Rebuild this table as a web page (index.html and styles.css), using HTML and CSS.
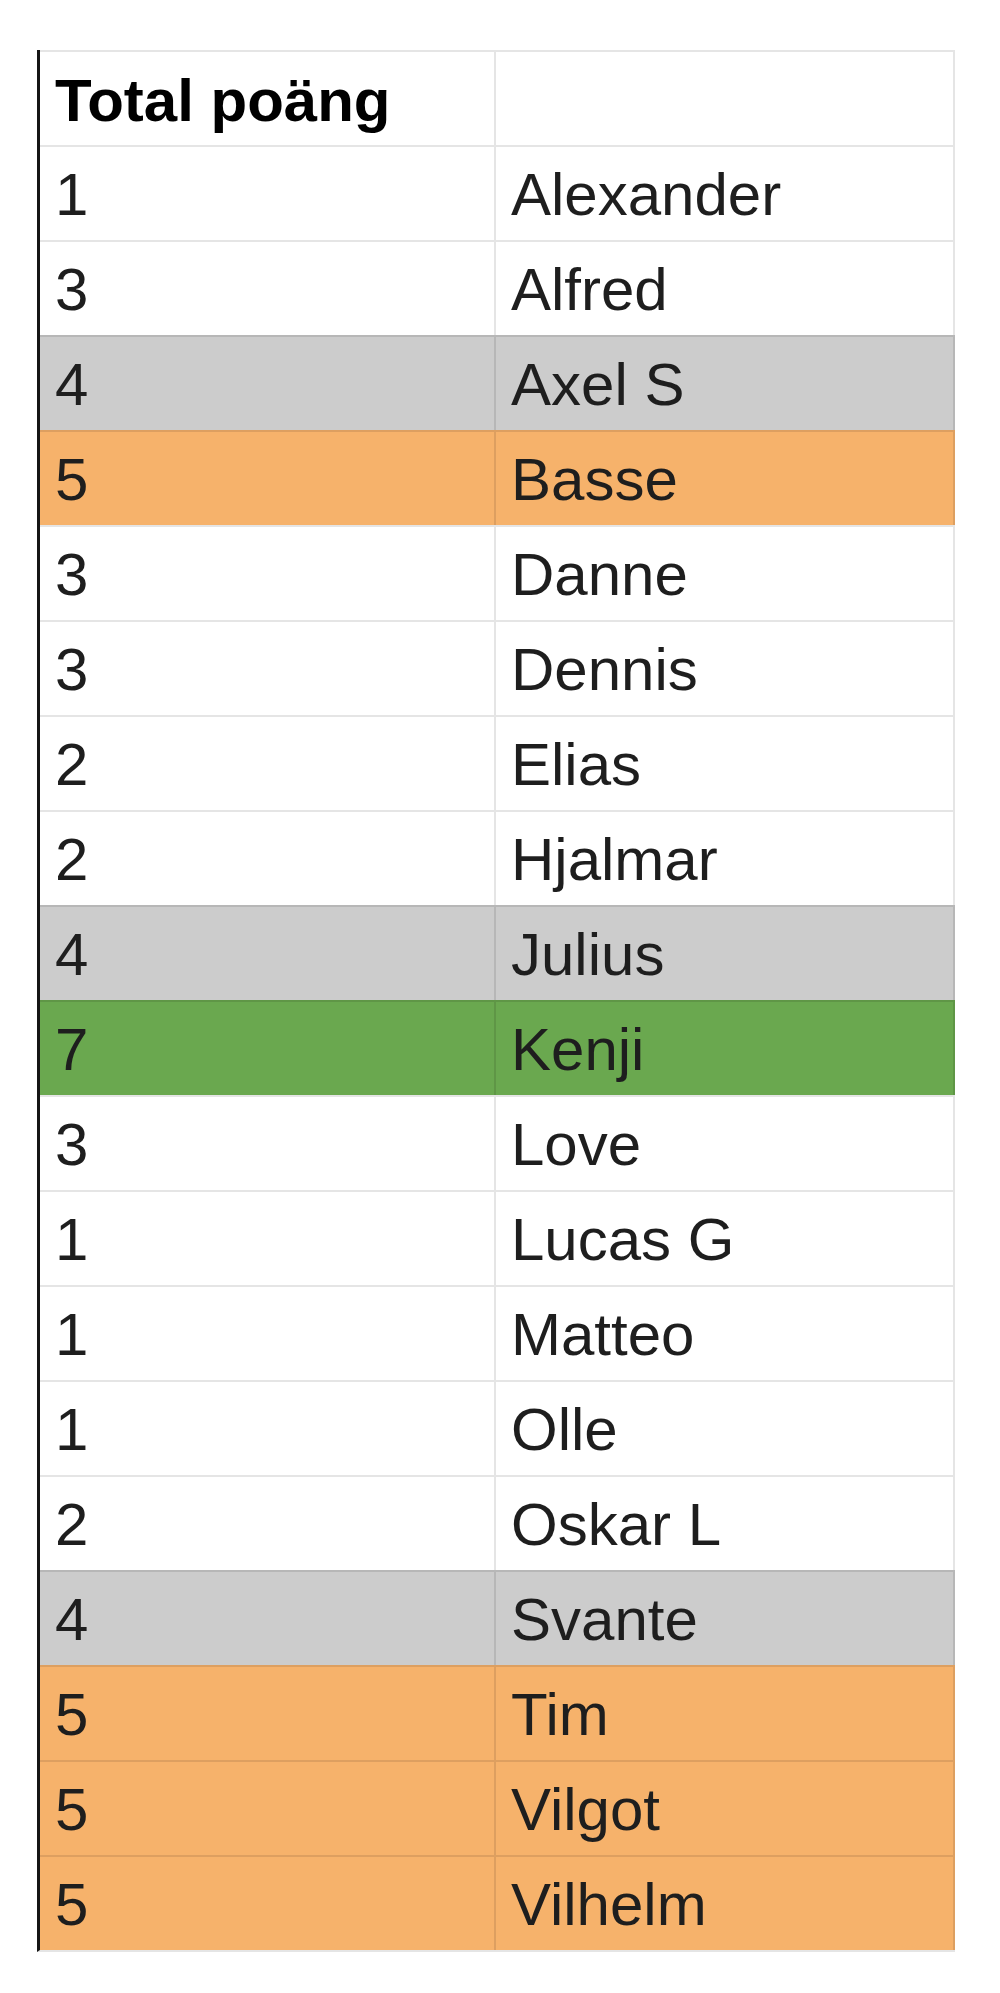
FILE: index.html
```html
<!DOCTYPE html>
<html lang="sv">
<head>
<meta charset="utf-8">
<title>Total poäng</title>
<link rel="stylesheet" href="styles.css">
</head>
<body>
<div class="sheet">
  <div class="row head"><div class="cell">Total poäng</div><div class="cell"></div></div>
  <div class="row"><div class="cell">1</div><div class="cell">Alexander</div></div>
  <div class="row"><div class="cell">3</div><div class="cell">Alfred</div></div>
  <div class="row gray"><div class="cell">4</div><div class="cell">Axel S</div></div>
  <div class="row orange"><div class="cell">5</div><div class="cell">Basse</div></div>
  <div class="row"><div class="cell">3</div><div class="cell">Danne</div></div>
  <div class="row"><div class="cell">3</div><div class="cell">Dennis</div></div>
  <div class="row"><div class="cell">2</div><div class="cell">Elias</div></div>
  <div class="row"><div class="cell">2</div><div class="cell">Hjalmar</div></div>
  <div class="row gray"><div class="cell">4</div><div class="cell">Julius</div></div>
  <div class="row green"><div class="cell">7</div><div class="cell">Kenji</div></div>
  <div class="row"><div class="cell">3</div><div class="cell">Love</div></div>
  <div class="row"><div class="cell">1</div><div class="cell">Lucas G</div></div>
  <div class="row"><div class="cell">1</div><div class="cell">Matteo</div></div>
  <div class="row"><div class="cell">1</div><div class="cell">Olle</div></div>
  <div class="row"><div class="cell">2</div><div class="cell">Oskar L</div></div>
  <div class="row gray"><div class="cell">4</div><div class="cell">Svante</div></div>
  <div class="row orange"><div class="cell">5</div><div class="cell">Tim</div></div>
  <div class="row orange"><div class="cell">5</div><div class="cell">Vilgot</div></div>
  <div class="row orange"><div class="cell">5</div><div class="cell">Vilhelm</div></div>
</div>
</body>
</html>
```
FILE: styles.css
```css
html, body {
  margin: 0;
  padding: 0;
  background: #ffffff;
}

body {
  height: 1993px;
  font-family: "Liberation Sans", Arial, sans-serif;
  color: #1e1e1e;
}

.sheet {
  margin: 50px 0 0 37px;
  width: 915px;
  border-left: 3px solid #161616;
  border-bottom: 2px solid rgba(0, 0, 0, 0.1);
  display: flex;
  flex-direction: column;
}

.row {
  display: grid;
  grid-template-columns: 456px 1fr;
  height: 93px;
  border-top: 2px solid rgba(0, 0, 0, 0.1);
  border-right: 2px solid rgba(0, 0, 0, 0.1);
  background: #ffffff;
}

.cell {
  font-size: 60px;
  line-height: 91px;
  padding: 2px 0 0 15px;
  white-space: nowrap;
  overflow: hidden;
}

.cell:first-child {
  border-right: 2px solid rgba(0, 0, 0, 0.1);
}

.head .cell {
  font-weight: bold;
  color: #000000;
  padding-top: 4px;
  line-height: 89px;
}

.gray { background: #cccccc; }
.orange { background: #f6b26b; }
.green { background: #6aa84f; }
```
